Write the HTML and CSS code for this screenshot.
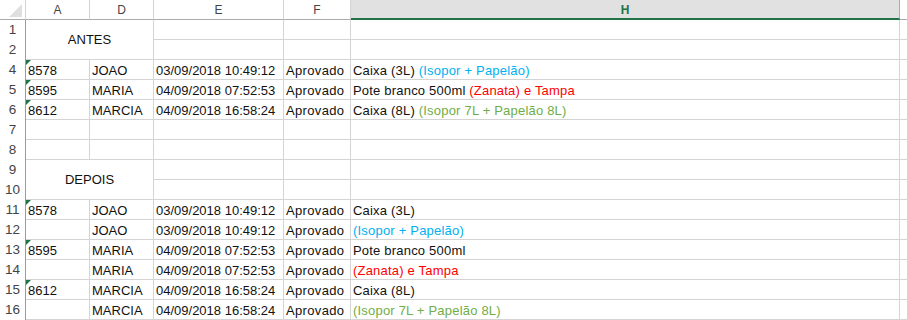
FILE: index.html
```html
<!DOCTYPE html>
<html lang="pt">
<head>
<meta charset="utf-8">
<title>Planilha</title>
<link rel="stylesheet" href="styles.css">
</head>
<body>
<div class="sheet">
  <div class="corner"><span class="corner-tri"></span></div>
  <div class="ch">A</div>
  <div class="ch">D</div>
  <div class="ch">E</div>
  <div class="ch">F</div>
  <div class="ch ch-sel">H</div>
  <div class="ch ch-last"></div>

  <div class="rh">1</div>
  <div class="cell merged">ANTES</div>
  <div class="cell"></div><div class="cell"></div><div class="cell"></div><div class="cell last"></div>
  <div class="rh">2</div>
  <div class="cell"></div><div class="cell"></div><div class="cell"></div><div class="cell last"></div>

  <div class="rh">4</div>
  <div class="cell num">8578</div><div class="cell">JOAO</div><div class="cell">03/09/2018 10:49:12</div><div class="cell st">Aprovado</div>
  <div class="cell desc">Caixa (3L) <span class="blue">(Isopor + Papelão)</span></div><div class="cell last"></div>
  <div class="rh">5</div>
  <div class="cell num">8595</div><div class="cell">MARIA</div><div class="cell">04/09/2018 07:52:53</div><div class="cell st">Aprovado</div>
  <div class="cell desc">Pote branco 500ml <span class="red">(Zanata) e Tampa</span></div><div class="cell last"></div>
  <div class="rh">6</div>
  <div class="cell num">8612</div><div class="cell">MARCIA</div><div class="cell">04/09/2018 16:58:24</div><div class="cell st">Aprovado</div>
  <div class="cell desc">Caixa (8L) <span class="green">(Isopor 7L + Papelão 8L)</span></div><div class="cell last"></div>

  <div class="rh">7</div>
  <div class="cell"></div><div class="cell"></div><div class="cell"></div><div class="cell"></div><div class="cell"></div><div class="cell last"></div>
  <div class="rh">8</div>
  <div class="cell"></div><div class="cell"></div><div class="cell"></div><div class="cell"></div><div class="cell"></div><div class="cell last"></div>

  <div class="rh">9</div>
  <div class="cell merged">DEPOIS</div>
  <div class="cell"></div><div class="cell"></div><div class="cell"></div><div class="cell last"></div>
  <div class="rh">10</div>
  <div class="cell"></div><div class="cell"></div><div class="cell"></div><div class="cell last"></div>

  <div class="rh">11</div>
  <div class="cell num">8578</div><div class="cell">JOAO</div><div class="cell">03/09/2018 10:49:12</div><div class="cell st">Aprovado</div>
  <div class="cell desc">Caixa (3L)</div><div class="cell last"></div>
  <div class="rh">12</div>
  <div class="cell"></div><div class="cell">JOAO</div><div class="cell">03/09/2018 10:49:12</div><div class="cell st">Aprovado</div>
  <div class="cell desc"><span class="blue">(Isopor + Papelão)</span></div><div class="cell last"></div>
  <div class="rh">13</div>
  <div class="cell num">8595</div><div class="cell">MARIA</div><div class="cell">04/09/2018 07:52:53</div><div class="cell st">Aprovado</div>
  <div class="cell desc">Pote branco 500ml</div><div class="cell last"></div>
  <div class="rh">14</div>
  <div class="cell"></div><div class="cell">MARIA</div><div class="cell">04/09/2018 07:52:53</div><div class="cell st">Aprovado</div>
  <div class="cell desc"><span class="red">(Zanata) e Tampa</span></div><div class="cell last"></div>
  <div class="rh">15</div>
  <div class="cell num">8612</div><div class="cell">MARCIA</div><div class="cell">04/09/2018 16:58:24</div><div class="cell st">Aprovado</div>
  <div class="cell desc">Caixa (8L)</div><div class="cell last"></div>
  <div class="rh">16</div>
  <div class="cell"></div><div class="cell">MARCIA</div><div class="cell">04/09/2018 16:58:24</div><div class="cell st">Aprovado</div>
  <div class="cell desc"><span class="green">(Isopor 7L + Papelão 8L)</span></div><div class="cell last"></div>
</div>
</body>
</html>
```
FILE: styles.css
```css
* { box-sizing: border-box; }
html, body { margin: 0; padding: 0; background: #fff; }
body { width: 907px; height: 320px; overflow: hidden; }

.sheet {
  display: grid;
  grid-template-columns: 26px 64px 64px 130px 67px 549px 1fr;
  grid-auto-rows: 20px;
  font-family: "Liberation Sans", Arial, sans-serif;
  color: #000;
}

.corner {
  position: relative;
  border-right: 1px solid #d4d4d4;
  border-bottom: 1px solid #ababab;
  background: #fff;
}
.corner-tri {
  position: absolute;
  right: 3px;
  bottom: 2px;
  width: 0;
  height: 0;
  border-left: 13px solid transparent;
  border-bottom: 13px solid #dfdfdf;
}

.ch {
  border-right: 1px solid #d4d4d4;
  border-bottom: 1px solid #ababab;
  background: #fff;
  color: #444;
  font-family: "Liberation Sans", Arial, sans-serif;
  font-size: 12px;
  text-align: center;
  padding-top: 2px;
  line-height: 17px;
}
.ch-sel {
  background: #e1e1e1;
  color: #217346;
  font-weight: bold;
  border-bottom: 2px solid #217346;
  border-right: 1px solid #ababab;
}
.ch-last { border-right: none; }

.rh {
  border-right: 1px solid #9b9b9b;
  color: #444;
  font-size: 13.5px;
  text-align: center;
  padding-top: 1px;
  line-height: 17px;
  background: #fff;
}

.cell {
  position: relative;
  border-right: 1px solid #d4d4d4;
  border-bottom: 1px solid #d4d4d4;
  font-size: 13px;
  padding: 2px 0 0 2px;
  line-height: 17px;
  white-space: nowrap;
  overflow: hidden;
  color: #111;
}
.cell.last { border-right: none; }
.cell.st { letter-spacing: 0.35px; }
.cell.desc { letter-spacing: 0.2px; }

.merged {
  grid-column: span 2;
  grid-row: span 2;
  display: flex;
  align-items: center;
  justify-content: center;
  padding: 0 0 1px 0;
}

.num::before {
  content: "";
  position: absolute;
  left: 0;
  top: 0;
  width: 0;
  height: 0;
  border-top: 5px solid #217346;
  border-right: 5px solid transparent;
}

.blue { color: #00b0f0; }
.red { color: #ff0000; }
.green { color: #70ad47; }
```
